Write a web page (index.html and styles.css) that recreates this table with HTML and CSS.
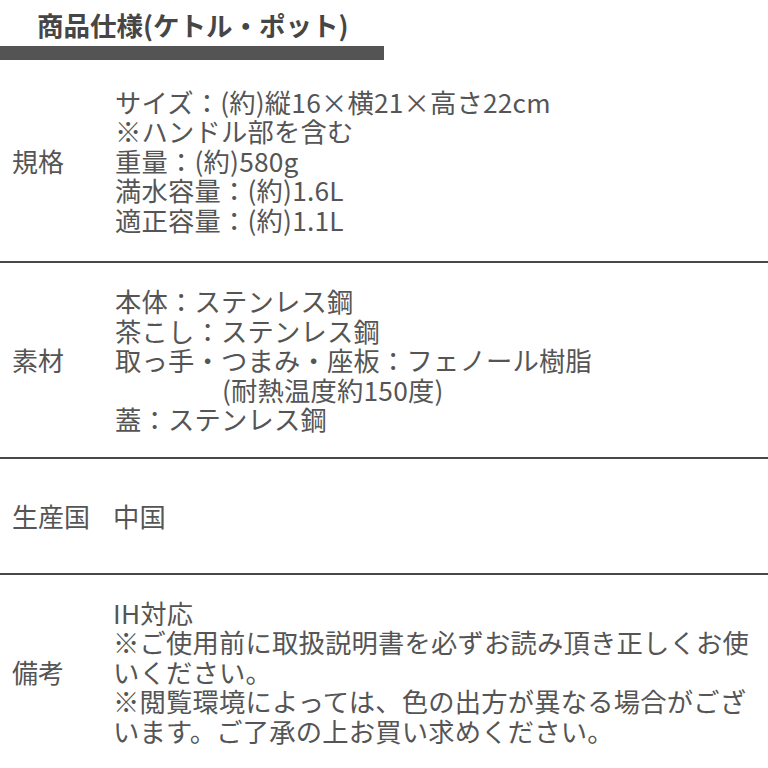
FILE: index.html
```html
<!DOCTYPE html>
<html lang="ja">
<head>
<meta charset="utf-8">
<link rel="stylesheet" href="styles.css">
</head>
<body>
<div class="page">
  <div class="head">
    <h1 class="title">商品仕様(ケトル・ポット)</h1>
    <div class="bar"></div>
  </div>
  <div class="row row-spec">
    <div class="label">規格</div>
    <div class="value">
      <div class="line">サイズ：(約)縦16×横21×高さ22cm</div>
      <div class="line">※ハンドル部を含む</div>
      <div class="line">重量：(約)580g</div>
      <div class="line">満水容量：(約)1.6L</div>
      <div class="line">適正容量：(約)1.1L</div>
    </div>
  </div>
  <div class="row row-material sep">
    <div class="label">素材</div>
    <div class="value">
      <div class="line">本体：ステンレス鋼</div>
      <div class="line">茶こし：ステンレス鋼</div>
      <div class="line">取っ手・つまみ・座板：フェノール樹脂</div>
      <div class="line indent">(耐熱温度約150度)</div>
      <div class="line">蓋：ステンレス鋼</div>
    </div>
  </div>
  <div class="row row-origin sep">
    <div class="label">生産国</div>
    <div class="value value-tight">
      <div class="line">中国</div>
    </div>
  </div>
  <div class="row row-note sep">
    <div class="label">備考</div>
    <div class="value value-tight">
      <div class="line">IH対応</div>
      <div class="line">※ご使用前に取扱説明書を必ずお読み頂き正しくお使</div>
      <div class="line">いください。</div>
      <div class="line">※閲覧環境によっては、色の出方が異なる場合がござ</div>
      <div class="line">います。ご了承の上お買い求めください。</div>
    </div>
  </div>
</div>
</body>
</html>
```

FILE: styles.css
```css
* {
  box-sizing: border-box;
}

html, body {
  margin: 0;
  padding: 0;
  background: #ffffff;
}

body {
  font-family: "Noto Sans CJK JP", "Noto Sans", sans-serif;
  color: #555555;
  width: 768px;
  height: 768px;
  overflow: hidden;
}

.head {
  display: flex;
  flex-direction: column;
}

.title {
  margin: 0;
  height: 46px;
  padding-left: 37px;
  font-size: 26.5px;
  line-height: 50px;
  font-weight: 700;
  color: #464646;
}

.bar {
  width: 384px;
  height: 14px;
  background: #545454;
}

.row {
  display: grid;
  grid-template-columns: 102px 1fr;
  align-items: center;
  padding-left: 12px;
}

.sep {
  border-top: 2px solid #474747;
}

.row-spec {
  height: 201px;
}

.row-material {
  height: 196px;
}

.row-origin {
  height: 116px;
}

.row-note {
  height: 195px;
}

.label {
  font-size: 26px;
  line-height: 29.5px;
  white-space: nowrap;
}

.value {
  font-size: 26.3px;
  line-height: 29.5px;
  letter-spacing: 0.2px;
  padding-left: 1px;
}

.value-tight {
  padding-left: 0;
  margin-left: -1px;
}

.line {
  white-space: nowrap;
}

.indent {
  padding-left: 107px;
}
```
